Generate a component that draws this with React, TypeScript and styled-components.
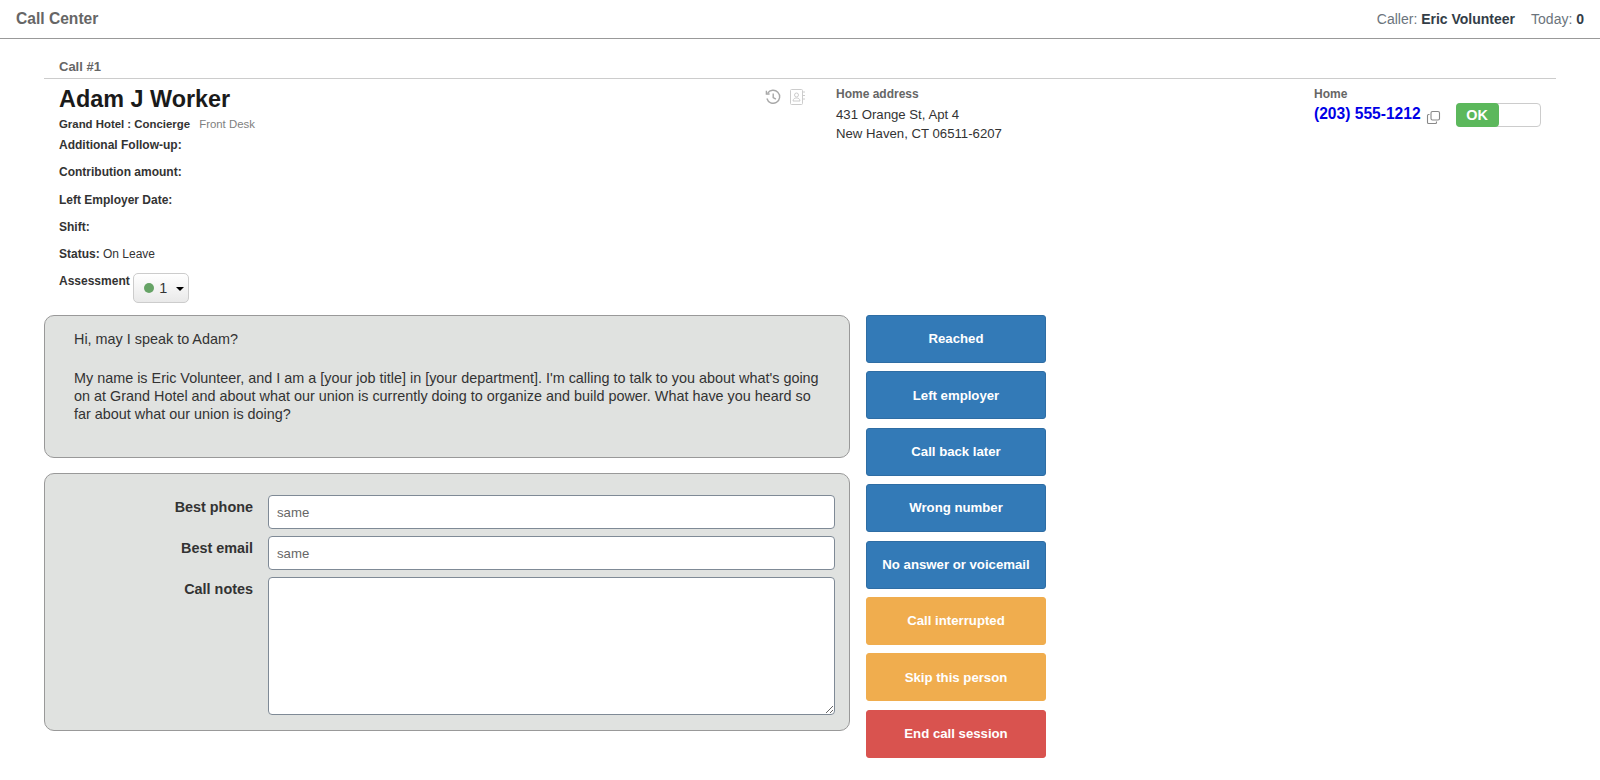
import React from 'react';
import styled, { createGlobalStyle } from 'styled-components';

const GlobalStyle = createGlobalStyle`
  html, body {
    margin: 0;
    padding: 0;
    background: #fff;
    font-family: "Liberation Sans", Arial, sans-serif;
    color: #222;
  }
  * {
    box-sizing: border-box;
  }
`;

const TopBar = styled.header`
  display: flex;
  justify-content: space-between;
  align-items: center;
  height: 39px;
  padding: 0 16px 1px;
  border-bottom: 1px solid #999;
`;

const Brand = styled.div`
  font-size: 15.6px;
  font-weight: bold;
  color: #666;
`;

const CallerInfo = styled.div`
  display: flex;
  gap: 16px;
  font-size: 14px;
  color: #6b747c;

  b {
    color: #333d47;
  }
`;

const Page = styled.main`
  width: 1512px;
  margin-left: 44px;
  padding-top: 20px;
`;

const CallTitle = styled.div`
  height: 20px;
  padding-left: 15px;
  font-size: 13px;
  font-weight: bold;
  line-height: 15px;
  color: #666;
  border-bottom: 1px solid #ccc;
`;

const InfoRow = styled.section`
  display: grid;
  grid-template-columns: 777px 478px 1fr;
  height: 236px;
`;

const PersonCol = styled.div`
  position: relative;
  padding: 6px 15px 0;
`;

const PersonName = styled.h1`
  margin: 0;
  font-size: 23.4px;
  line-height: 28px;
  font-weight: bold;
  color: #1a1a1a;
`;

const Employer = styled.div`
  margin-top: 4px;
  font-size: 11.4px;
  line-height: 14px;
  font-weight: bold;
  color: #333;

  span {
    margin-left: 6px;
    font-weight: normal;
    color: #808080;
  }
`;

const Field = styled.div`
  margin-top: 7px;
  margin-bottom: 13.3px;
  font-size: 12px;
  line-height: 14px;
  color: #333;

  & + & {
    margin-top: 0;
  }

  b {
    color: #333;
  }
`;

const AssessmentRow = styled.div`
  display: flex;
  align-items: flex-start;
  gap: 3.5px;
  font-size: 12px;
  line-height: 14px;
  font-weight: bold;
  color: #333;
`;

const AssessmentButton = styled.button`
  display: flex;
  align-items: center;
  width: 56px;
  height: 30px;
  margin-top: -1px;
  padding: 0 0 0 10px;
  font-family: inherit;
  font-size: 14.4px;
  color: #333;
  background: linear-gradient(#fff, #e9e9e9);
  border: 1px solid #ccc;
  border-radius: 5px;
`;

const Dot = styled.i`
  width: 10px;
  height: 10px;
  margin-right: 5px;
  background: #66a366;
  border-radius: 50%;
`;

const Caret = styled.i`
  width: 0;
  height: 0;
  margin-left: 9px;
  margin-top: 2px;
  border-top: 4px solid #000;
  border-left: 4px solid transparent;
  border-right: 4px solid transparent;
`;

const IconGroup = styled.div`
  position: absolute;
  top: 10px;
  right: 16px;
  display: flex;
  gap: 9px;
`;

const HistoryGlyph = styled.svg`
  color: #a8a8a8;
`;

const ContactGlyph = styled.svg`
  color: #ccc;
`;

const AddressCol = styled.div`
  padding: 8px 15px 0;
`;

const FieldHeading = styled.div`
  font-size: 12px;
  line-height: 14px;
  font-weight: bold;
  color: #666;
`;

const AddressBlock = styled.div`
  margin-top: 5.3px;
  font-size: 13.2px;
  line-height: 18.7px;
  color: #333;
`;

const PhoneCol = styled.div`
  padding: 8px 15px 0;
`;

const PhoneRow = styled.div`
  display: flex;
  align-items: flex-start;
  margin-top: 3px;
`;

const PhoneNumber = styled.a`
  font-size: 15.6px;
  line-height: 20px;
  font-weight: bold;
  white-space: nowrap;
  color: #0000e6;
`;

const CopyIcon = styled.svg`
  margin: 6px 0 0 5px;
  color: #888;
`;

const OkToggle = styled.div`
  display: flex;
  width: 85px;
  height: 24px;
  margin: -1px 0 0 15px;
  background: #fff;
  border: 1px solid #ccc;
  border-radius: 4px;
`;

const OkLabel = styled.span`
  width: 43px;
  margin: -1px 0 -1px -1px;
  font-size: 14.4px;
  line-height: 24px;
  font-weight: bold;
  text-align: center;
  color: #fff;
  background: #5cb85c;
  border-radius: 4px;
`;

const CallRow = styled.section`
  display: flex;
  align-items: flex-start;
  gap: 16.5px;
`;

const LeftStack = styled.div`
  display: flex;
  flex-direction: column;
  gap: 15.3px;
  width: 805.5px;
`;

const Panel = styled.div`
  background: #e0e2e0;
  border: 1px solid #999;
  border-radius: 10px;
`;

const ScriptPanel = styled(Panel)`
  height: 143px;
  padding: 13.6px 29px;
  font-size: 14.4px;
  line-height: 18px;
  color: #333;

  p {
    margin: 0 0 21.400px;
  }
`;

const FormPanel = styled(Panel)`
  display: grid;
  grid-template-columns: 208px 567px;
  grid-template-rows: 34px 34px 138px;
  column-gap: 15px;
  row-gap: 7px;
  height: 258px;
  padding: 21px 0 0;
`;

const FormLabel = styled.label`
  padding-top: 4px;
  font-size: 14.4px;
  line-height: 16px;
  font-weight: bold;
  text-align: right;
  color: #333;
`;

const TextInput = styled.input`
  width: 100%;
  height: 34px;
  padding: 0 8px;
  font-family: inherit;
  font-size: 13.2px;
  color: #666;
  background: #fff;
  border: 1px solid #7f8a96;
  border-radius: 4px;
`;

const NotesArea = styled.textarea`
  display: block;
  width: 100%;
  height: 138px;
  padding: 6px 8px;
  font-family: inherit;
  font-size: 13.2px;
  background: #fff;
  border: 1px solid #7f8a96;
  border-radius: 4px;
`;

const ButtonStack = styled.div`
  display: flex;
  flex-direction: column;
  gap: 8.4px;
  width: 180px;
`;

const kindColors = {
  primary: { bg: '#337ab7', border: '#2e6da4' },
  warning: { bg: '#f0ad4e', border: '#f0ad4e' },
  danger: { bg: '#d9534f', border: '#d9534f' }
};

type Kind = keyof typeof kindColors;

const ActionButton = styled.button<{ $kind: Kind }>`
  height: 48px;
  padding: 0 0 0.6px;
  font-family: inherit;
  font-size: 13.2px;
  font-weight: bold;
  color: #fff;
  background: ${(p) => kindColors[p.$kind].bg};
  border: 1px solid ${(p) => kindColors[p.$kind].border};
  border-radius: 3px;
`;

const actions: { label: string; kind: Kind }[] = [
  { label: 'Reached', kind: 'primary' },
  { label: 'Left employer', kind: 'primary' },
  { label: 'Call back later', kind: 'primary' },
  { label: 'Wrong number', kind: 'primary' },
  { label: 'No answer or voicemail', kind: 'primary' },
  { label: 'Call interrupted', kind: 'warning' },
  { label: 'Skip this person', kind: 'warning' },
  { label: 'End call session', kind: 'danger' }
];

const HistoryIcon = () => (
  <HistoryGlyph width="16" height="16" viewBox="0 0 16 16" fill="none" stroke="currentColor" strokeWidth="1.4">
    <path d="M2.6 4.400A6.500 6.500 0 1 1 1.900 9.500" />
    <path d="M1.400 1.800v3.200h3.200" />
    <path d="M8.200 4.600v3.900l2.700 1.700" />
  </HistoryGlyph>
);

const ContactIcon = () => (
  <ContactGlyph width="15" height="16" viewBox="0 0 15 16" fill="none" stroke="currentColor" strokeWidth="1">
    <rect x="0.500" y="0.500" width="12" height="15" rx="1" />
    <circle cx="6.500" cy="6" r="2" />
    <path d="M3 12c.3-2.400 1.800-3 3.500-3s3.200.6 3.500 3z" />
    <path d="M13 3h2M13 6.500h2M13 10h2" />
  </ContactGlyph>
);

const App = () => (
  <>
    <GlobalStyle />
    <TopBar>
      <Brand>Call Center</Brand>
      <CallerInfo>
        <span>
          Caller: <b>Eric Volunteer</b>
        </span>
        <span>
          Today: <b>0</b>
        </span>
      </CallerInfo>
    </TopBar>
    <Page>
      <CallTitle>Call #1</CallTitle>
      <InfoRow>
        <PersonCol>
          <PersonName>Adam J Worker</PersonName>
          <IconGroup>
            <HistoryIcon />
            <ContactIcon />
          </IconGroup>
          <Employer>
            Grand Hotel : Concierge <span>Front Desk</span>
          </Employer>
          <Field>
            <b>Additional Follow-up:</b>
          </Field>
          <Field>
            <b>Contribution amount:</b>
          </Field>
          <Field>
            <b>Left Employer Date:</b>
          </Field>
          <Field>
            <b>Shift:</b>
          </Field>
          <Field>
            <b>Status:</b> On Leave
          </Field>
          <AssessmentRow>
            Assessment
            <AssessmentButton>
              <Dot />1<Caret />
            </AssessmentButton>
          </AssessmentRow>
        </PersonCol>
        <AddressCol>
          <FieldHeading>Home address</FieldHeading>
          <AddressBlock>
            431 Orange St, Apt 4
            <br />
            New Haven, CT 06511-6207
          </AddressBlock>
        </AddressCol>
        <PhoneCol>
          <FieldHeading>Home</FieldHeading>
          <PhoneRow>
            <PhoneNumber>(203) 555-1212</PhoneNumber>
            <CopyIcon width="15" height="15" viewBox="0 0 15 15" fill="none" stroke="currentColor" strokeWidth="1.100">
              <rect x="5" y="1.500" width="8.500" height="8.500" rx="1.500" />
              <path d="M3.500 4.500h-1a1 1 0 0 0-1 1v7a1 1 0 0 0 1 1h7a1 1 0 0 0 1-1v-1" />
            </CopyIcon>
            <OkToggle>
              <OkLabel>OK</OkLabel>
            </OkToggle>
          </PhoneRow>
        </PhoneCol>
      </InfoRow>
      <CallRow>
        <LeftStack>
          <ScriptPanel>
            <p>Hi, may I speak to Adam?</p>
            <p>
              My name is Eric Volunteer, and I am a [your job title] in [your department]. I'm calling to talk to you
              about what's going on at Grand Hotel and about what our union is currently doing to organize and build
              power. What have you heard so far about what our union is doing?
            </p>
          </ScriptPanel>
          <FormPanel>
            <FormLabel htmlFor="best-phone">Best phone</FormLabel>
            <TextInput id="best-phone" defaultValue="same" />
            <FormLabel htmlFor="best-email">Best email</FormLabel>
            <TextInput id="best-email" defaultValue="same" />
            <FormLabel htmlFor="call-notes">Call notes</FormLabel>
            <NotesArea id="call-notes" />
          </FormPanel>
        </LeftStack>
        <ButtonStack>
          {actions.map((action) => (
            <ActionButton key={action.label} $kind={action.kind}>
              {action.label}
            </ActionButton>
          ))}
        </ButtonStack>
      </CallRow>
    </Page>
  </>
);

export default App;
